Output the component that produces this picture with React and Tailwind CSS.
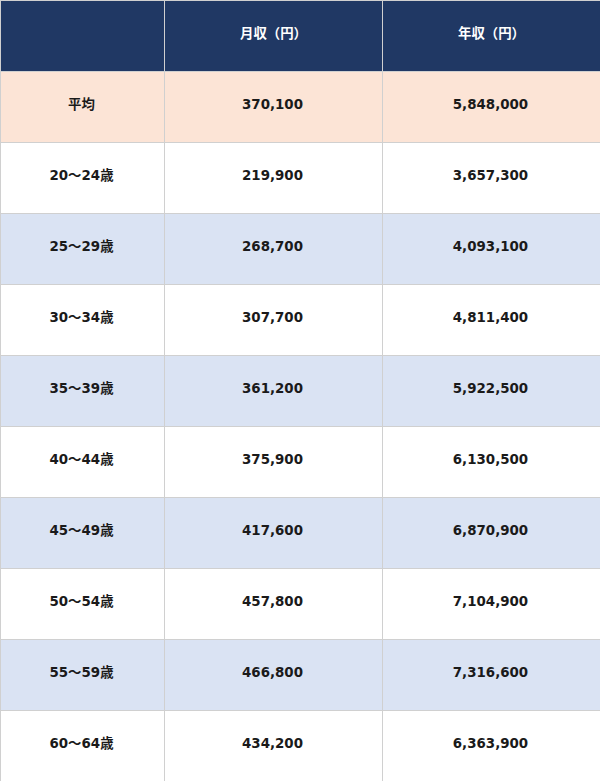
const rows = [
  { label: "平均", monthly: "370,100", yearly: "5,848,000", tone: "peach" },
  { label: "20〜24歳", monthly: "219,900", yearly: "3,657,300", tone: "white" },
  { label: "25〜29歳", monthly: "268,700", yearly: "4,093,100", tone: "blue" },
  { label: "30〜34歳", monthly: "307,700", yearly: "4,811,400", tone: "white" },
  { label: "35〜39歳", monthly: "361,200", yearly: "5,922,500", tone: "blue" },
  { label: "40〜44歳", monthly: "375,900", yearly: "6,130,500", tone: "white" },
  { label: "45〜49歳", monthly: "417,600", yearly: "6,870,900", tone: "blue" },
  { label: "50〜54歳", monthly: "457,800", yearly: "7,104,900", tone: "white" },
  { label: "55〜59歳", monthly: "466,800", yearly: "7,316,600", tone: "blue" },
  { label: "60〜64歳", monthly: "434,200", yearly: "6,363,900", tone: "white" },
];

const toneClass = {
  peach: "bg-[#fce4d6]",
  white: "bg-white",
  blue: "bg-[#dae3f3]",
};

export default function App() {
  return (
    <div
      className="w-[600px] h-[781px] bg-white text-[13.4px] font-bold text-[#1a1a1a]"
      style={{ fontFamily: '"DejaVu Sans", "Noto Sans CJK JP", sans-serif' }}
    >
      <div className="grid grid-cols-[164px_218px_218px] border-t border-l border-[#d0d0d0]">
        {/* Header */}
        <div className="h-[71px] bg-[#203864] border-r border-b border-[#d0d0d0]" />
        <div className="h-[71px] pb-[4px] bg-[#203864] border-r border-b border-[#d0d0d0] flex items-center justify-center text-white">
          月収（円）
        </div>
        <div className="h-[71px] pb-[4px] bg-[#203864] border-r border-b border-[#d0d0d0] flex items-center justify-center text-white">
          年収（円）
        </div>

        {/* Rows */}
        {rows.map((r) => (
          <>
            <div key={r.label + "a"} className={`h-[71px] pb-[4px] pr-[2px] ${toneClass[r.tone]} border-r border-b border-[#d0d0d0] flex items-center justify-center`}>
              {r.label}
            </div>
            <div key={r.label + "b"} className={`h-[71px] pb-[4px] pr-[2px] ${toneClass[r.tone]} border-r border-b border-[#d0d0d0] flex items-center justify-center`}>
              {r.monthly}
            </div>
            <div key={r.label + "c"} className={`h-[71px] pb-[4px] pr-[2px] ${toneClass[r.tone]} border-r border-b border-[#d0d0d0] flex items-center justify-center`}>
              {r.yearly}
            </div>
          </>
        ))}
      </div>
    </div>
  );
}
